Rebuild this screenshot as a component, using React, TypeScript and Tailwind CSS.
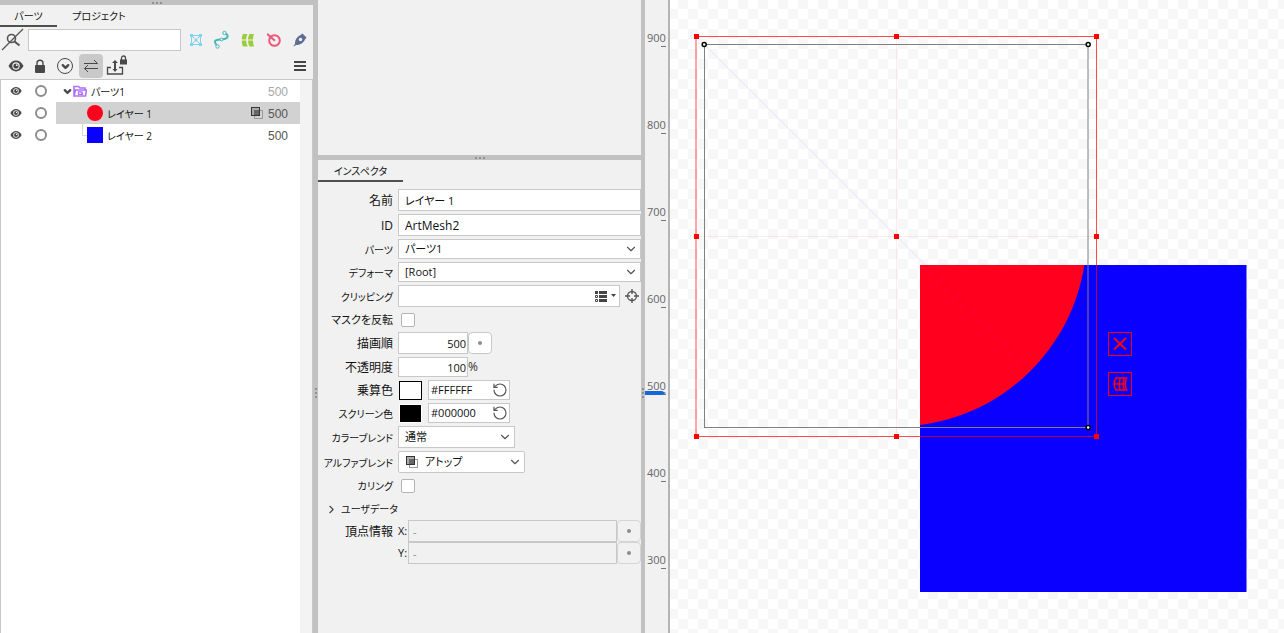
import React, { useState } from 'react';
import { ChevronDown, ChevronRight, RotateCcw } from 'lucide-react';
import clsx from 'clsx';

const FIELD = 'border border-[#c8c8c8] bg-white text-[#111] outline-none';

const EyeIcon = ({ size }: { size: number }) => (
  <svg width={size} height={size} viewBox="0 0 16 16">
    <path d="M0.5 8C2.5 4.4 5 2.600 8 2.600s5.500 1.800 7.500 5.400c-2 3.600-4.500 5.400-7.500 5.400S2.500 11.600.5 8z" fill="#484848" />
    <circle cx="8" cy="8" r="3.700" fill="#f4f4f4" />
    <circle cx="8" cy="8" r="2.600" fill="#484848" />
    <circle cx="8.800" cy="7.200" r="0.900" fill="#f4f4f4" />
  </svg>
);

const LockIcon = ({ size }: { size: number }) => (
  <svg width={size} height={size} viewBox="0 0 14 14">
    <path d="M4 7V4.200a3 3 0 0 1 6 0V7" fill="none" stroke="#484848" strokeWidth="1.400" />
    <rect x="2" y="6" width="10" height="8" rx="1" fill="#484848" />
  </svg>
);

const BlendIcon = () => (
  <svg width="12" height="12" viewBox="0 0 12 12">
    <rect x="3.500" y="3.500" width="8" height="8" fill="none" stroke="#9a9a9a" />
    <rect x="0.500" y="0.500" width="8" height="8" fill="#aaa" stroke="#333" />
    <rect x="3" y="3" width="5" height="5" fill="#666" />
  </svg>
);

const SearchOffIcon = () => (
  <svg width="24" height="24" viewBox="0 0 24 24" fill="none" stroke="#555">
    <circle cx="11.500" cy="10.500" r="4" strokeWidth="1.600" />
    <path d="M14.500 13.500l5 4" strokeWidth="2" />
    <path d="M2 22L23 1" strokeWidth="1.200" />
  </svg>
);

const MeshIcon = () => (
  <svg width="12" height="12" viewBox="0 0 12 12" stroke="#7ed3ee" fill="none">
    <path d="M1.500 1.500h9v9h-9z" />
    <path d="M3 3l6 6M9 3L3 9" strokeWidth="1.300" strokeDasharray="1.500 1" />
    <path d="M0 0h3v3H0zM9 0h3v3H9zM0 9h3v3H0zM9 9h3v3H9zM5 5h2v2H5z" fill="#7ed3ee" stroke="none" />
  </svg>
);

const CurveIcon = () => (
  <svg width="18" height="20" viewBox="0 0 18 20" stroke="#4ab5b5" fill="none">
    <path d="M3.500 15C-.5 10 4 9.500 8.500 9.500S17 7 13 3.500" strokeWidth="2" />
    <circle cx="11.500" cy="3" r="1.700" fill="#f1f1f1" />
    <circle cx="4.500" cy="16.500" r="1.700" fill="#f1f1f1" />
    <circle cx="8.500" cy="9.500" r="1.400" fill="#f1f1f1" />
  </svg>
);

const WarpIcon = () => (
  <svg width="14" height="14" viewBox="0 0 14 14" fill="#9ccb3b">
    <path d="M2 1h4.500c-1 2-1.200 3.500-1.200 5.500H.8C.8 4.500 1 3 2 1zM8.500 1H13c-.8 2-1 3.500-1 5.500H7C7 4.500 7.500 3 8.500 1zM.8 7.500h4.500c0 2 .4 4 1.400 6H2c-.9-2-1.200-4-1.200-6zM7 7.500h5c0 2 .2 4 1 6H8.500c-1-2-1.500-4-1.500-6z" />
  </svg>
);

const RotationIcon = () => (
  <svg width="14" height="14" viewBox="0 0 14 14" stroke="#ef5777" fill="none">
    <circle cx="7.500" cy="7.500" r="5.300" strokeWidth="2" />
    <path d="M0 .8l8 7" strokeWidth="2" />
  </svg>
);

const PenIcon = () => (
  <svg width="14" height="14" viewBox="0 0 14 14">
    <path d="M9.500.5L13.500 4.500 12 6.500C10 10.500 7 12 3 12L.8 13.500.4 13 2 11C2 7 3.500 4 7.500 2z" fill="#5f6e93" />
    <circle cx="7.500" cy="6.500" r="1.700" fill="#f1f1f1" />
  </svg>
);

const ExportLockIcon = () => (
  <svg width="22" height="22" viewBox="0 0 22 22" fill="none" stroke="#484848">
    <path d="M5 12.500H1.500v6.500h15v-6.500H13" strokeWidth="1.300" />
    <path d="M9 16V7" strokeWidth="2" />
    <path d="M6 8l3-3 3 3zM6.500 14L9 17l2.500-3z" fill="#484848" stroke="none" />
    <path d="M15.500 5V3a2 2 0 0 1 4 0v2" strokeWidth="1.300" />
    <rect x="14" y="4.500" width="7" height="5" fill="#484848" stroke="none" />
  </svg>
);

const FolderIcon = () => (
  <svg width="14" height="12" viewBox="0 0 14 12" fill="none" stroke="#b070f5" strokeWidth="1.600">
    <path d="M1 10.500V1.500h4.500L7 3h5v2M1 11l1.500-6H13.500L12.500 11z" />
    <path d="M9.500 6.800H5.500v2.500h4V8H8" strokeWidth="1.200" />
  </svg>
);

const TargetIcon = () => (
  <svg width="14" height="14" viewBox="0 0 14 14" fill="none" stroke="#555" strokeWidth="1.300">
    <circle cx="7" cy="7" r="4.500" />
    <path d="M7 0v5M7 9v5M0 7h5M9 7h5" />
  </svg>
);

const ListIcon = () => (
  <svg width="12" height="11" viewBox="0 0 12 11" fill="#444">
    <path d="M0 0h3v3H0zM4 0h8v3H4zM4 4h8v3H4zM4 8h8v3H4z" />
    <path d="M.5 4.500h2v2h-2zM.5 8.500h2v2h-2z" fill="none" stroke="#444" />
  </svg>
);

const Grip = ({ vertical }: { vertical?: boolean }) => (
  <div className={clsx('flex gap-0.5', vertical && 'flex-col')}>
    {[0, 1, 2].map((i) => (
      <span key={i} className="w-0.5 h-0.5 bg-[#909090]" />
    ))}
  </div>
);

const tools = [
  { name: 'アートメッシュ', Icon: MeshIcon },
  { name: 'アートパス', Icon: CurveIcon },
  { name: 'ワープデフォーマ', Icon: WarpIcon },
  { name: '回転デフォーマ', Icon: RotationIcon },
  { name: 'グルー', Icon: PenIcon },
];

const layers = [
  { id: 1, name: 'レイヤー 1', order: 500, shape: 'circle' },
  { id: 2, name: 'レイヤー 2', order: 500, shape: 'square' },
];

function RowToggles() {
  return (
    <div className="w-[55px] shrink-0 flex items-center bg-white">
      <button aria-label="表示" className="w-[30px] flex justify-center">
        <EyeIcon size={12} />
      </button>
      <button aria-label="ロック" className="ml-1 w-3 h-3 rounded-full border-2 border-[#8c8c8c]" />
    </div>
  );
}

function PartsPanel() {
  const [selected, setSelected] = useState(1);

  return (
    <section className="w-[313px] shrink-0 flex flex-col">
      <div className="h-[5px] shrink-0 bg-[#c1c1c1] flex items-center justify-center">
        <Grip />
      </div>
      <div className="h-[22px] shrink-0 flex text-[10px]">
        <button className="w-[57px] pt-0.5 border-b-2 border-[#505050]">パーツ</button>
        <button className="ml-2 w-[68px] pb-0.5 pt-0.5">プロジェクト</button>
      </div>
      <div className="h-[26px] shrink-0 flex items-center">
        <button aria-label="検索" className="w-7">
          <SearchOffIcon />
        </button>
        <input aria-label="検索" className={clsx(FIELD, 'w-[153px] h-[22px] px-1 text-xs')} />
        <div className="flex-1 flex items-center justify-between pl-[3px] pr-px">
          {tools.map(({ name, Icon }) => (
            <button key={name} aria-label={name} className="w-6 h-6 flex items-center justify-center">
              <Icon />
            </button>
          ))}
        </div>
      </div>
      <div className="h-[26px] shrink-0 flex items-center pr-[7px]">
        <button aria-label="表示" className="w-8 flex justify-center">
          <EyeIcon size={16} />
        </button>
        <button aria-label="ロック" className="w-4 flex justify-center">
          <LockIcon size={14} />
        </button>
        <button aria-label="展開" className="ml-[9px] w-4 h-4 rounded-full border border-[#484848] flex items-center justify-center">
          <ChevronDown size={11} strokeWidth={5} color="#484848" />
        </button>
        <button aria-label="同期" className="ml-1.5 w-6 h-6 rounded-sm bg-[#c9c9c9] flex items-center justify-center">
          <svg width="16" height="14" viewBox="0 0 16 14" fill="none" stroke="#484848">
            <path d="M1 4.500h13.500M11 1l3.500 3.500M15 9.500H1.500M5 13L1.500 9.500 5 6" />
          </svg>
        </button>
        <button aria-label="描画順ロック" className="ml-[3px]">
          <ExportLockIcon />
        </button>
        <button aria-label="メニュー" className="ml-auto w-3 flex flex-col gap-0.5">
          <span className="h-0.5 bg-[#444]" />
          <span className="h-0.5 bg-[#444]" />
          <span className="h-0.5 bg-[#444]" />
        </button>
      </div>

      <div className="flex-1 flex border-t border-l border-r border-[#c8c8c8]">
        <div className="flex-1 bg-white text-[10px]">
          <div className="h-[22px] flex">
            <RowToggles />
            <button className="flex-1 flex items-center pl-1.5 pr-3">
              <ChevronDown size={11} strokeWidth={5} color="#484848" />
              <FolderIcon />
              <span className="ml-1 pt-0.5">パーツ1</span>
              <span className="ml-auto pt-0.5 text-xs text-[#a8a8a8] font-['Liberation_Sans']">500</span>
            </button>
          </div>
          {layers.map((layer) => (
            <div key={layer.id} className="h-[22px] flex">
              <RowToggles />
              <button
                onClick={() => setSelected(layer.id)}
                className={clsx('flex-1 flex items-center pr-3', selected === layer.id && 'bg-[#d2d2d2]')}
              >
                <span className="w-[31px] h-[22px] pl-[26px]">
                  <span className={clsx('block h-3 border-[#d8d8d8]', layer.id === 2 && 'border-l border-b')} />
                </span>
                <span className={clsx('w-4 h-4', layer.shape === 'circle' ? 'rounded-full bg-[#ff001e]' : 'bg-[#0a00ff]')} />
                <span className="ml-1 pt-0.5">{layer.name}</span>
                <span className="ml-auto flex items-center gap-[5px] text-xs text-[#555] font-['Liberation_Sans']">
                  {layer.id === 1 && <BlendIcon />}
                  <span className="pt-0.5">{layer.order}</span>
                </span>
              </button>
            </div>
          ))}
        </div>
        <div className="w-3 bg-[#f3f3f3]" />
      </div>
    </section>
  );
}

interface RowProps {
  label: string;
  htmlFor?: string;
  height: string;
  size?: string;
  children: React.ReactNode;
}

const Row: React.FC<RowProps> = ({ label, htmlFor, height, size = 'text-[10px]', children }) => (
  <div className={clsx('flex items-center gap-[5px]', height)}>
    <label htmlFor={htmlFor} className={clsx('w-[75px] shrink-0 pt-0.5 flex justify-end whitespace-nowrap', size)}>
      {label}
    </label>
    {children}
  </div>
);

interface SelectProps {
  id: string;
  value: string;
  className: string;
  icon?: React.ReactNode;
}

const SelectBox: React.FC<SelectProps> = ({ id, value, className, icon }) => (
  <div className={clsx('relative h-full', className)}>
    <select
      id={id}
      className={clsx(FIELD, 'block w-full h-full appearance-none pr-5 text-[11px]', icon ? 'pl-[26px] rounded-xs' : 'pl-1.5')}
    >
      <option>{value}</option>
    </select>
    {icon && <span className="absolute left-2 inset-y-0 flex items-center pointer-events-none">{icon}</span>}
    <span className="absolute right-[3px] inset-y-0 flex items-center pointer-events-none">
      <ChevronDown size={14} strokeWidth={2} color="#555" />
    </span>
  </div>
);

const KeyButton = ({ label, disabled }: { label: string; disabled?: boolean }) => (
  <button
    aria-label={label}
    disabled={disabled}
    className={clsx(
      'w-6 h-[22px] shrink-0 rounded-sm border flex items-center justify-center',
      disabled ? 'border-[#d4d4d4]' : 'border-[#c8c8c8] bg-white',
    )}
  >
    <span className="w-1 h-1 rounded-full bg-[#8c8c8c]" />
  </button>
);

const ColorField = ({ id, value, swatch }: { id: string; value: string; swatch: string }) => (
  <div className="h-full flex items-center gap-1.5">
    <button aria-label={value} className={clsx('w-[23px] h-[19px] ml-px border', swatch)} />
    <div className="h-full w-[82px] flex items-center border border-[#c8c8c8] bg-white pr-px">
      <input id={id} defaultValue={value} className="w-0 flex-1 pl-0.5 text-[11px] text-[#111] outline-none" />
      <button aria-label="リセット">
        <RotateCcw size={16} strokeWidth={1.75} color="#555" />
      </button>
    </div>
  </div>
);

function Inspector() {
  const [open, setOpen] = useState(false);

  return (
    <section className="w-[323px] shrink-0 flex flex-col">
      <div className="h-[155px] shrink-0" />
      <div className="h-[5px] shrink-0 bg-[#c1c1c1] flex items-center justify-center">
        <Grip />
      </div>
      <button className="w-[85px] h-[22px] pt-0.5 shrink-0 border-b-2 border-[#505050] text-[10px]">インスペクタ</button>

      <div className="mt-[7px] flex flex-col gap-[3px]">
        <Row label="名前" htmlFor="name" height="h-[22px]" size="text-xs">
          <input id="name" defaultValue="レイヤー 1" className={clsx(FIELD, 'w-0 flex-1 h-full px-1.5 text-[11px]')} />
        </Row>
        <Row label="ID" htmlFor="mesh-id" height="h-[22px]" size="text-xs">
          <input id="mesh-id" defaultValue="ArtMesh2" className={clsx(FIELD, 'w-0 flex-1 h-full px-1.5 text-xs')} />
        </Row>
        <Row label="パーツ" htmlFor="parts" height="h-5">
          <SelectBox id="parts" value="パーツ1" className="flex-1" />
        </Row>
        <Row label="デフォーマ" htmlFor="deformer" height="h-5">
          <SelectBox id="deformer" value="[Root]" className="flex-1" />
        </Row>
        <Row label="クリッピング" htmlFor="clipping" height="h-[22px]">
          <div className="flex-1 h-full flex items-center border border-[#c8c8c8] bg-white pr-[3px]">
            <input id="clipping" className="w-0 flex-1 px-1 text-xs outline-none" />
            <button aria-label="一覧" className="flex items-center gap-1">
              <ListIcon />
              <svg width="5" height="4" viewBox="0 0 5 4">
                <path d="M0 0h5L2.500 3z" fill="#444" />
              </svg>
            </button>
          </div>
          <button aria-label="対象を選択" className="mr-0.5">
            <TargetIcon />
          </button>
        </Row>
        <Row label="マスクを反転" htmlFor="invert" height="h-[19px]" size="text-[11px]">
          <input id="invert" type="checkbox" className="ml-[3px] w-3.5 h-3.5 appearance-none rounded-xs border border-[#b4b4b4] bg-white checked:bg-[#555]" />
        </Row>
        <Row label="描画順" htmlFor="order" height="h-[22px]" size="text-xs">
          <div className="flex h-full">
            <input id="order" defaultValue="500" className={clsx(FIELD, 'w-[70px] h-full px-px text-right text-[11px]')} />
            <KeyButton label="描画順キー" />
          </div>
        </Row>
        <Row label="不透明度" htmlFor="opacity" height="h-5" size="text-xs">
          <div className="flex h-full items-center text-xs text-[#333]">
            <input id="opacity" defaultValue="100" className={clsx(FIELD, 'w-[70px] h-full px-px text-right text-[11px]')} />
            %
          </div>
        </Row>
        <Row label="乗算色" htmlFor="multiply" height="h-5" size="text-xs">
          <ColorField id="multiply" value="#FFFFFF" swatch="bg-white border-black" />
        </Row>
        <Row label="スクリーン色" htmlFor="screen" height="h-5" size="text-[10px]">
          <ColorField id="screen" value="#000000" swatch="bg-black border-white" />
        </Row>
        <Row label="カラーブレンド" htmlFor="color-blend" height="h-[22px]">
          <SelectBox id="color-blend" value="通常" className="w-[117px]" />
        </Row>
        <Row label="アルファブレンド" htmlFor="alpha-blend" height="h-[22px]">
          <SelectBox id="alpha-blend" value="アトップ" className="w-[127px]" icon={<BlendIcon />} />
        </Row>
        <Row label="カリング" htmlFor="culling" height="h-[19px]">
          <input id="culling" type="checkbox" className="ml-[3px] w-3.5 h-3.5 appearance-none rounded-xs border border-[#b4b4b4] bg-white checked:bg-[#555]" />
        </Row>
        <div>
          <button onClick={() => setOpen(!open)} className="h-[22px] pl-[7px] flex items-center gap-[3px] text-[10px]">
            <ChevronRight size={13} strokeWidth={2} color="#444" className={clsx(open && 'rotate-90')} />
            ユーザデータ
          </button>
          {['X', 'Y'].map((axis) => (
            <Row key={axis} label={axis === 'X' ? '頂点情報' : ''} htmlFor={`vertex-${axis}`} height="h-[22px]" size="text-xs">
              <div className="flex-1 flex h-full items-center text-[11px]">
                <span className="w-2.5">{axis}:</span>
                <input
                  id={`vertex-${axis}`}
                  aria-label={axis}
                  disabled
                  defaultValue="-"
                  className="w-0 flex-1 h-full border border-[#c8c8c8] px-1 text-[#8c8c8c]"
                />
                <KeyButton label={`${axis}キー`} disabled />
              </div>
            </Row>
          ))}
        </div>
      </div>
    </section>
  );
}

function Ruler() {
  return (
    <div className="relative w-[25px] shrink-0 pt-[30px] border-r-2 border-[#b4b4b4] text-[11px] text-[#666] overflow-hidden">
      {[900, 800, 700, 600, 500, 400, 300].map((n) => (
        <div key={n} className="h-[87px] pl-0.5 leading-4">
          {n}
          <div className="ml-3.5 w-[5px] h-px bg-[#777]" />
        </div>
      ))}
      <svg className="absolute left-0 top-[390px]" width="22" height="6" viewBox="0 0 22 6">
        <path d="M0 1h17l4 2-4 2H0z" fill="#1668d8" />
      </svg>
    </div>
  );
}

const handles = [
  [26, 36], [226, 36], [426, 36],
  [26, 236], [226, 236], [426, 236],
  [26, 436], [226, 436], [426, 436],
];

const vertices = [[34, 44], [418, 44], [418, 427]];

function ModelCanvas() {
  return (
    <main className="flex-1 min-w-0 overflow-hidden bg-[conic-gradient(#fff_25%,#f7f7f7_0_50%,#fff_0_75%,#f7f7f7_0)] bg-[length:20px_20px] bg-[position:8px_-1px]">
      <svg width="614" height="633" viewBox="0 0 614 633" fill="none">
        <defs>
          <clipPath id="atop">
            <rect x="250" y="265" width="326.500" height="327" />
          </clipPath>
        </defs>
        <rect x="250" y="265" width="326.500" height="327" fill="#0a00ff" />
        <circle cx="226" cy="236" r="190.500" fill="#ff001e" clipPath="url(#atop)" />
        <path d="M34.500 44.500l384 383" stroke="#00f" strokeOpacity="0.080" />
        <path d="M226.500 36v400M26 236.500h401" stroke="#f00" strokeOpacity="0.080" />
        <rect x="34.500" y="44.500" width="383.500" height="383" stroke="#808080" />
        <rect x="26" y="36.500" width="400.500" height="400" stroke="#f00" strokeOpacity="0.700" />
        {handles.map(([x, y]) => (
          <rect key={`${x}-${y}`} x={x - 2} y={y - 2} width="5" height="5" fill="#f00" />
        ))}
        {vertices.map(([x, y]) => (
          <circle key={`${x}-${y}`} cx={x + 0.2} cy={y + 0.5} r="2" fill="#fff" stroke="#000" strokeWidth="1.500" />
        ))}
        <g stroke="#f00">
          <rect x="438.500" y="332.500" width="23" height="23" />
          <rect x="438.500" y="372.500" width="23" height="23" />
          <path d="M444 338l12 11.500M456 338l-12 11.500" strokeWidth="2" />
          <path d="M446 378h10.500c-1.500 4-1.500 8 0 12H446c-2.500-4-2.500-8 0-12zM450 378c-1 4-1 8 0 12M454 378c-1 4-1 8 0 12M444 384h12" strokeWidth="1.500" />
        </g>
      </svg>
    </main>
  );
}

export default function App() {
  return (
    <div className="h-screen flex overflow-hidden bg-[#f1f1f1] text-[#111] font-['Open_Sans','Noto_Sans_CJK_JP',sans-serif] [font-feature-settings:'palt']">
      <PartsPanel />
      <div className="w-[5px] shrink-0 bg-[#c1c1c1] flex items-center justify-center pt-[153px]">
        <Grip vertical />
      </div>
      <Inspector />
      <div className="w-1 shrink-0 bg-[#c1c1c1] flex items-center justify-center pt-[153px]">
        <Grip vertical />
      </div>
      <Ruler />
      <ModelCanvas />
    </div>
  );
}
